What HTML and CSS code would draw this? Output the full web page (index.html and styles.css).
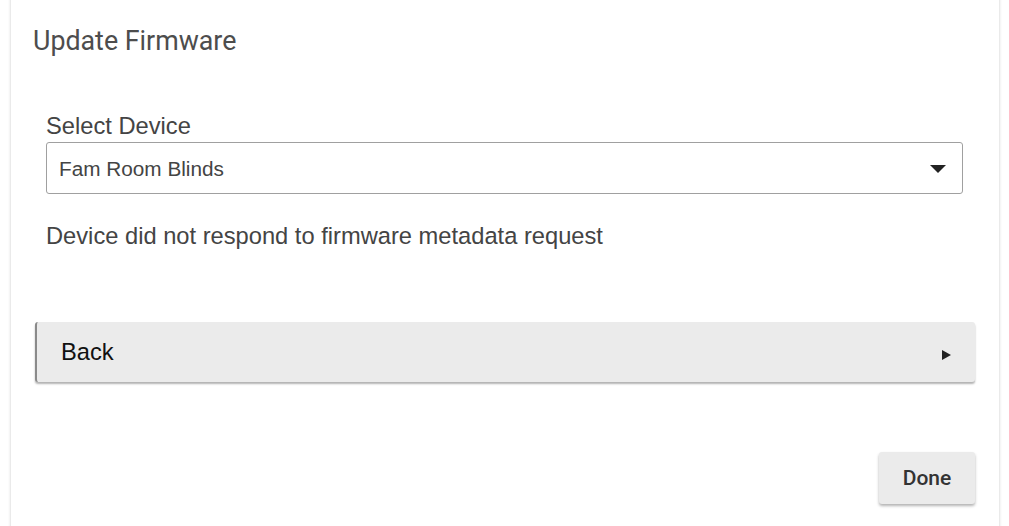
FILE: index.html
```html
<!DOCTYPE html>
<html>
<head>
<meta charset="utf-8">
<link rel="stylesheet" href="styles.css">
</head>
<body>
<div class="card">
  <h2 class="title">Update Firmware</h2>
  <div class="group">
    <label class="label">Select Device</label>
    <div class="select">
      <span class="select-text">Fam Room Blinds</span>
      <svg class="caret" width="16" height="8" viewBox="0 0 16 8"><path d="M0 0H16L8 8Z" fill="#222"/></svg>
    </div>
    <p class="message">Device did not respond to firmware metadata request</p>
  </div>
  <div class="back">
    <span class="back-text">Back</span>
    <svg class="arrow" width="9" height="10" viewBox="0 0 9 10"><path d="M0 0L9 5L0 10Z" fill="#222"/></svg>
  </div>
  <div class="actions">
    <button class="done">Done</button>
  </div>
</div>
</body>
</html>
```

FILE: styles.css
```css
html, body {
  margin: 0;
  padding: 0;
  background: #fff;
  overflow: hidden;
}
.card {
  margin: -10px 0 0 11px;
  width: 988px;
  height: 600px;
  box-sizing: border-box;
  padding: 35px 24px 0 24px;
  background: #fff;
  box-shadow: 0 0 3px rgba(0,0,0,0.22);
}
.title {
  margin: 0 0 0 -2px;
  font-family: Roboto, sans-serif;
  font-weight: 400;
  font-size: 26.8px;
  line-height: 32px;
  color: #4d4d4d;
}
.group {
  margin-top: 55px;
  padding: 0 12px 0 11px;
  display: flex;
  flex-direction: column;
}
.label {
  font-family: "Liberation Sans", Arial, sans-serif;
  font-size: 23.7px;
  line-height: 28px;
  color: #444;
}
.select {
  margin-top: 2px;
  height: 52px;
  box-sizing: border-box;
  border: 1px solid #a0a0a0;
  border-radius: 3px;
  display: flex;
  align-items: center;
  justify-content: space-between;
  padding: 1px 16px 0 12px;
}
.select-text {
  font-family: "Liberation Sans", Arial, sans-serif;
  font-size: 20.75px;
  color: #444;
}
.caret {
  display: block;
}
.message {
  margin: 28px 0 0 0;
  font-family: "Liberation Sans", Arial, sans-serif;
  font-size: 23.7px;
  line-height: 28px;
  color: #444;
}
.back {
  margin-top: 72px;
  height: 60px;
  box-sizing: border-box;
  background: #ebebeb;
  border-left: 2px solid #8a8a8a;
  border-radius: 3px;
  box-shadow: 0 2px 2px rgba(0,0,0,0.3);
  display: flex;
  align-items: center;
  justify-content: space-between;
  padding: 0 24px 0 24px;
}
.back-text {
  font-family: "Liberation Sans", Arial, sans-serif;
  font-size: 23.7px;
  color: #111;
}
.arrow {
  display: block;
  margin-top: 6px;
}
.actions {
  margin-top: 70px;
  display: flex;
  justify-content: flex-end;
}
.done {
  width: 96px;
  height: 52px;
  border: none;
  border-radius: 3px;
  background: #ebebeb;
  box-shadow: 0 2px 3px rgba(0,0,0,0.3);
  font-family: Roboto, sans-serif;
  font-weight: 500;
  font-size: 21px;
  color: #333;
  padding: 0;
}
```
